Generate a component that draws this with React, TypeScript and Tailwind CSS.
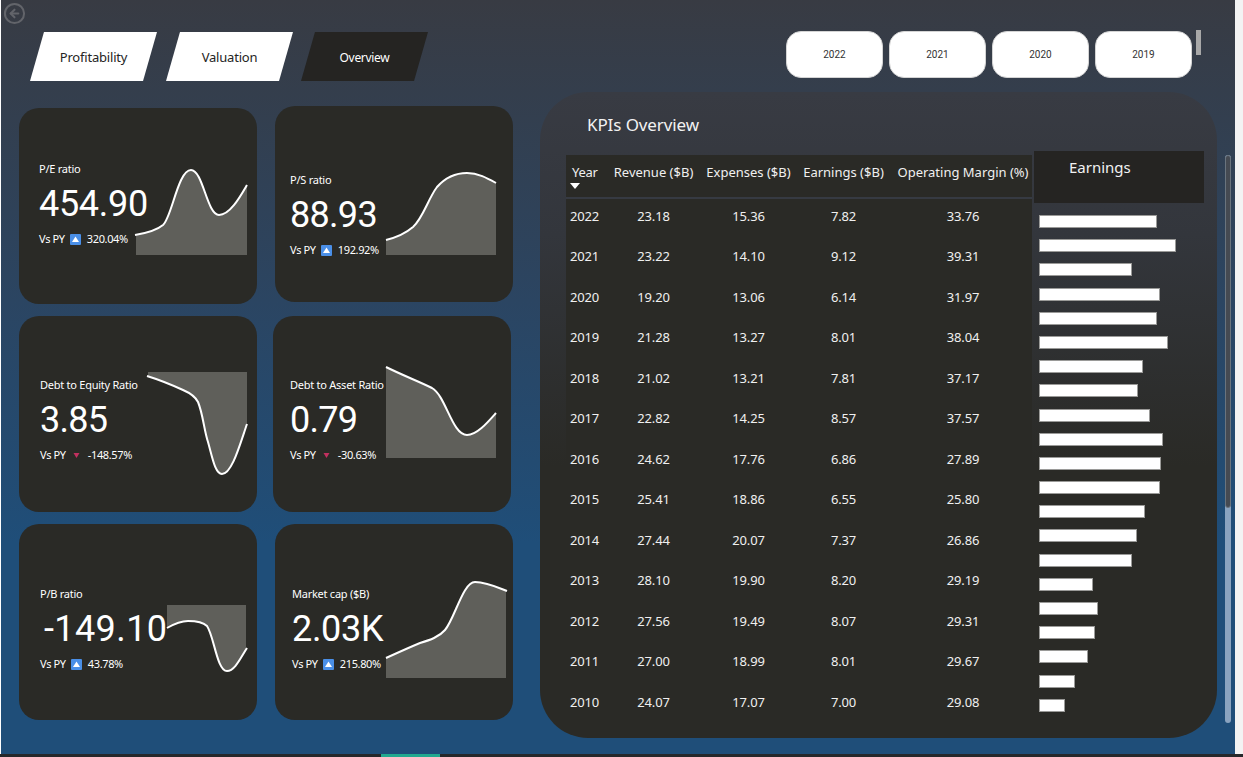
import { CircleArrowLeft } from 'lucide-react';

const tabs = [
  { label: 'Profitability', className: 'bg-white text-[#252423] text-[13px] tracking-[-0.2px] ml-[29px]' },
  { label: 'Valuation', className: 'bg-white text-[#252423] text-[13px] tracking-[-0.2px] ml-[9px]' },
  { label: 'Overview', className: 'bg-[#252422] text-white text-[12px] tracking-[-0.3px] ml-[8px]' },
];

const years = ['2022', '2021', '2020', '2019'];

// viewBoxes of the sparklines are in page pixels, which made tracing them easier
const cards = [
  {
    label: 'P/E ratio',
    value: '454.90',
    pct: '320.04%',
    up: true,
    cardClass: 'mt-[16px]',
    textClass: 'ml-[20px] mt-[53px] w-[96px]',
    valueClass: 'tracking-[-0.3px]',
    svgClass: 'mt-[57px] w-[115px] h-[95px]',
    viewBox: '135 165 115 95',
    line: 'M135 235 C147 233 157 230 163 225 C172 217 178 170 191 170 C203 170 207 215 219 215 C230 215 240 197 247 185',
    area: 'M136 235 C147 233 157 230 163 225 C172 217 178 170 191 170 C203 170 207 215 219 215 C230 215 240 197 247 185 L247 255 L136 255 Z',
  },
  {
    label: 'P/S ratio',
    value: '88.93',
    pct: '192.92%',
    up: true,
    cardClass: 'mt-[14px] ml-[2px]',
    textClass: 'ml-[15px] mt-[66px] w-[95px]',
    valueClass: 'tracking-[-0.7px]',
    svgClass: 'mt-[64px] w-[114px] h-[90px]',
    viewBox: '385 170 114 90',
    line: 'M386 240 C398 237 406 233 413 227 C423 218 428 199 437 187 C445 178 456 173 467 173 C478 173 487 178 496 183',
    area: 'M386 240 C398 237 406 233 413 227 C423 218 428 199 437 187 C445 178 456 173 467 173 C478 173 487 178 496 183 L496 255 L386 255 Z',
  },
  {
    label: 'Debt to Equity Ratio',
    value: '3.85',
    pct: '-148.57%',
    up: false,
    cardClass: '',
    textClass: 'ml-[21px] mt-[61px] w-[106px]',
    valueClass: 'tracking-[-0.7px]',
    svgClass: 'mt-[52px] w-[104px] h-[110px]',
    viewBox: '146 368 104 110',
    line: 'M147 376 C160 380 172 385 183 390 C190 393 195 396 198 402 C203 414 204 430 208 442 C212 456 215 474 222 474 C232 474 240 444 247 424',
    area: 'M148 372 L247 372 L247 424 C240 444 232 474 222 474 C215 474 212 456 208 442 C204 430 203 414 198 402 C195 396 190 393 183 390 C172 385 160 380 148 376 Z',
  },
  {
    label: 'Debt to Asset Ratio',
    value: '0.79',
    pct: '-30.63%',
    up: false,
    cardClass: '',
    textClass: 'ml-[17px] mt-[61px] w-[95px]',
    valueClass: 'tracking-[-0.7px]',
    svgClass: 'mt-[47px] w-[114px] h-[100px]',
    viewBox: '385 363 114 100',
    line: 'M386 367 C402 375 420 382 432 388 C446 396 452 435 467 435 C477 435 488 422 496 413',
    area: 'M386 367 C402 375 420 382 432 388 C446 396 452 435 467 435 C477 435 488 422 496 413 L496 458 L386 458 Z',
  },
  {
    label: 'P/B ratio',
    value: '-149.10',
    pct: '43.78%',
    up: true,
    cardClass: '',
    textClass: 'ml-[21px] mt-[62px] w-[125px]',
    valueClass: 'pl-[4px] tracking-[0.4px]',
    svgClass: 'mt-[76px] w-[85px] h-[75px]',
    viewBox: '165 600 85 75',
    line: 'M167 628 C174 624 181 621 188 621 C195 621 203 622 207 626 C214 636 217 671 227 671 C235 671 241 657 247 648',
    area: 'M167 605 L246 605 L246 649 C241 657 235 671 227 671 C217 671 214 636 207 626 C203 622 195 621 188 621 C181 621 174 624 167 628 Z',
  },
  {
    label: 'Market cap ($B)',
    value: '2.03K',
    pct: '215.80%',
    up: true,
    cardClass: 'ml-[2px]',
    textClass: 'ml-[17px] mt-[62px] w-[93px]',
    valueClass: 'tracking-[-0.3px]',
    svgClass: 'mt-[54px] w-[125px] h-[104px]',
    viewBox: '385 578 125 104',
    line: 'M386 658 C397 653 408 648 420 643 C430 640 439 637 445 630 C455 618 463 582 475 582 C486 582 497 587 507 591',
    area: 'M386 658 C397 653 408 648 420 643 C430 640 439 637 445 630 C455 618 463 582 475 582 C486 582 497 587 506 591 L506 678 L386 678 Z',
  },
];

const rows = [
  ['2022', '23.18', '15.36', '7.82', '33.76'],
  ['2021', '23.22', '14.10', '9.12', '39.31'],
  ['2020', '19.20', '13.06', '6.14', '31.97'],
  ['2019', '21.28', '13.27', '8.01', '38.04'],
  ['2018', '21.02', '13.21', '7.81', '37.17'],
  ['2017', '22.82', '14.25', '8.57', '37.57'],
  ['2016', '24.62', '17.76', '6.86', '27.89'],
  ['2015', '25.41', '18.86', '6.55', '25.80'],
  ['2014', '27.44', '20.07', '7.37', '26.86'],
  ['2013', '28.10', '19.90', '8.20', '29.19'],
  ['2012', '27.56', '19.49', '8.07', '29.31'],
  ['2011', '27.00', '18.99', '8.01', '29.67'],
  ['2010', '24.07', '17.07', '7.00', '29.08'],
];

const barEnds = [
  1157, 1176, 1132, 1160, 1157, 1168, 1143, 1138, 1150, 1163, 1161, 1160, 1145, 1137, 1132, 1093, 1098, 1095, 1088,
  1075, 1065,
];

const tableCols = 'grid grid-cols-[41px_93px_97px_93px_142px]';

function Delta({ up }: { up: boolean }) {
  if (up) {
    return (
      <svg viewBox="0 0 11 11" className="w-[11px] h-[11px] shrink-0">
        <rect width="11" height="11" rx="1" fill="#4a8fe7" />
        <path d="M5.5 2.5 L9 8 L2 8 Z" fill="#fff" />
      </svg>
    );
  }
  return (
    <svg viewBox="0 0 11 11" className="w-[11px] h-[11px] shrink-0">
      <path d="M2.5 3 L8.5 3 L5.5 8 Z" fill="#c2305f" />
    </svg>
  );
}

export default function App() {
  return (
    <div className="w-[1243px] h-[757px] flex flex-col overflow-hidden bg-[#f3f3f3] font-['Noto_Sans',sans-serif]">
      <div className="flex-1 w-[1235px] border-l border-white bg-[linear-gradient(#383b43,#2b4562_40%,#1f4e79_72%)]">
        <div className="h-[32px] pl-[2px] pt-[2px]">
          <CircleArrowLeft size={23} strokeWidth={2.1} className="text-[#62646a]" />
        </div>

        {/* Tabs and year slicer */}
        <div className="h-[60px] flex items-start">
          {tabs.map((tab) => (
            <div
              key={tab.label}
              className={`w-[127px] h-[49px] pt-[2px] flex items-center justify-center [clip-path:polygon(11%_0,100%_0,89%_100%,0_100%)] ${tab.className}`}
            >
              {tab.label}
            </div>
          ))}
          <div className="ml-auto mr-[34px] -mt-px flex items-start">
            <div className="flex gap-[6px]">
              {years.map((year) => (
                <div
                  key={year}
                  className="w-[97px] h-[47px] rounded-[15px] bg-white border border-[#d4d4d4] flex items-center justify-center text-[10px] text-[#333] font-['Roboto',sans-serif]"
                >
                  {year}
                </div>
              ))}
            </div>
            <div className="ml-[4px] -mt-px w-[5px] h-[25px] bg-[#a8a8a8]" />
          </div>
        </div>

        <div className="flex items-start">
          {/* KPI cards */}
          <div className="ml-[18px] grid grid-cols-[254px_240px] grid-rows-[224px_208px_208px]">
            {cards.map((card) => (
              <div key={card.label} className={`w-[238px] h-[196px] rounded-[20px] bg-[#2a2a26] flex items-start text-white ${card.cardClass}`}>
                <div className={`shrink-0 whitespace-nowrap ${card.textClass}`}>
                  <div className="text-[11px] leading-[16px] tracking-[-0.25px]">{card.label}</div>
                  <div className={`mt-[8px] h-[38px] text-[36px] leading-[38px] font-['Roboto',sans-serif] ${card.valueClass}`}>
                    {card.value}
                  </div>
                  <div className="mt-[8px] flex items-center text-[11px] leading-[16px] tracking-[-0.35px]">
                    <span>Vs PY</span>
                    <span className="ml-[5px]">
                      <Delta up={card.up} />
                    </span>
                    <span className="ml-[6px]">{card.pct}</span>
                  </div>
                </div>
                <svg viewBox={card.viewBox} className={`shrink-0 overflow-visible ${card.svgClass}`}>
                  <path d={card.area} fill="#5f5f5a" />
                  <path d={card.line} fill="none" stroke="#fff" strokeWidth="2" />
                </svg>
              </div>
            ))}
          </div>

          {/* Table panel */}
          <div className="ml-[27px] w-[677px] h-[646px] rounded-[48px] bg-[linear-gradient(#383b43,#33363c_22%,#2a2a26_58%)] text-white">
            <div className="h-[63px] pl-[47px] pt-[21px] text-[17px] leading-[24px] tracking-[-0.1px] text-[#f2f2f2]">KPIs Overview</div>
            <div className="flex items-start pl-[26px]">
              <div className="w-[466px] bg-[#2a2a26] text-[13px] text-[#f0f0f0]">
                <div className={`${tableCols} h-[42px] pt-[8px] leading-[18px] whitespace-nowrap text-center`}>
                  <div className="pl-[6px] text-left tracking-[-0.25px]">
                    <div>Year</div>
                    <svg viewBox="0 0 10 6" className="mt-[2px] -ml-[2px] w-[10px] h-[6px]">
                      <path d="M0 0 L10 0 L5 6 Z" fill="#fff" />
                    </svg>
                  </div>
                  <div>Revenue ($B)</div>
                  <div>Expenses ($B)</div>
                  <div>Earnings ($B)</div>
                  <div className="pl-[4px]">Operating Margin (%)</div>
                </div>
                <div className="h-[2px] bg-[#363a42]" />
                {rows.map((row) => (
                  <div key={row[0]} className={`${tableCols} h-[40.5px] pb-[6px] items-center text-center tracking-[-0.15px]`}>
                    <div className="pl-[4px] text-left">{row[0]}</div>
                    <div>{row[1]}</div>
                    <div>{row[2]}</div>
                    <div>{row[3]}</div>
                    <div className="pl-[4px]">{row[4]}</div>
                  </div>
                ))}
              </div>

              <div className="ml-[2px] -mt-[4px] w-[170px]">
                <div className="h-[52px] bg-[#252422] pl-[35px] pt-[5px] text-[15px] leading-[22px] text-[#f2f2f2]">Earnings</div>
                <div className="pl-[5px] pt-[12px] flex flex-col gap-[11.2px]">
                  {barEnds.map((end, i) => (
                    <div key={i} className="h-[13px] bg-white border border-[#9a9a98]" style={{ width: end - 1039 }} />
                  ))}
                </div>
              </div>
            </div>
          </div>

          {/* Page scrollbar */}
          <div className="ml-[8px] mt-[63px] w-[6px] h-[568px] rounded-full bg-[#8aa3bf]">
            <div className="h-[353px] rounded-full bg-[#454a52] border border-[#6a747e]" />
          </div>
        </div>
      </div>

      <div className="h-[3px] bg-[#26282b] flex">
        <div className="ml-[381px] w-[59px] bg-[#22a98f]" />
      </div>
    </div>
  );
}
